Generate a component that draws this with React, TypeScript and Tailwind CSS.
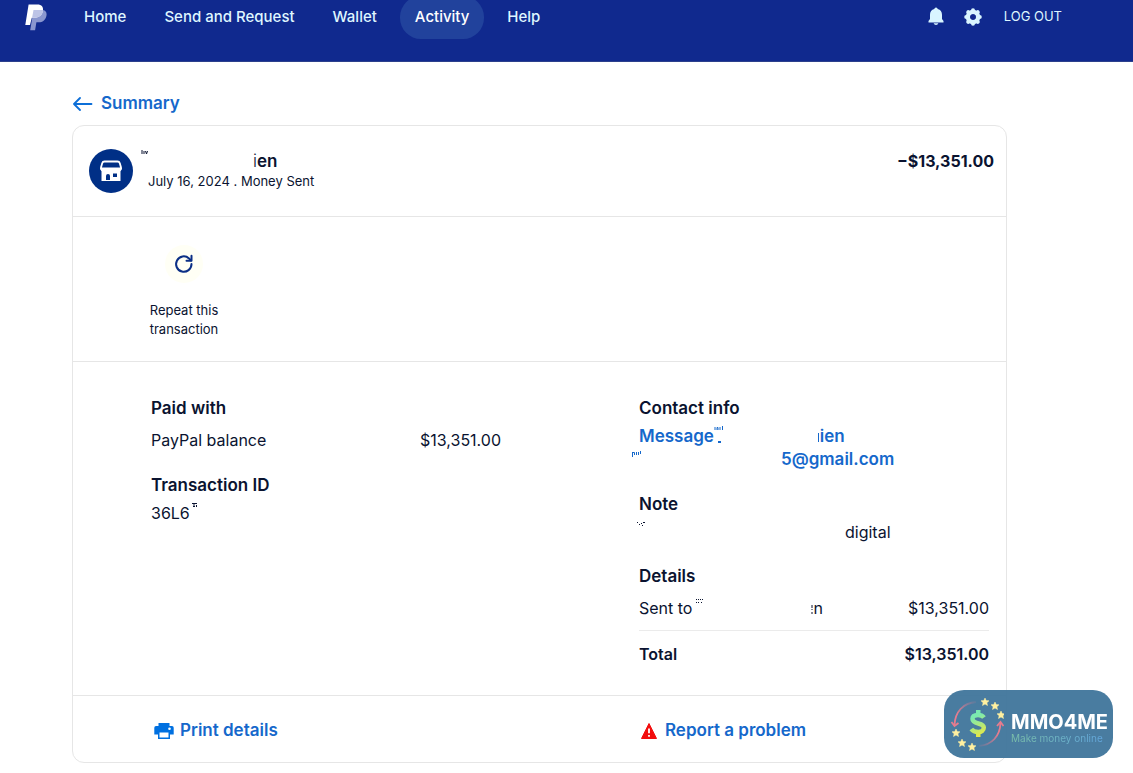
import React from 'react';

interface NavItem {
  id: string;
  label: string;
  active?: boolean;
}

interface SpecksProps {
  className: string;
  d: string;
  width: number;
  height: number;
}

const navItems: NavItem[] = [
  { id: '1', label: 'Home' },
  { id: '2', label: 'Send and Request' },
  { id: '3', label: 'Wallet' },
  { id: '4', label: 'Activity', active: true },
  { id: '5', label: 'Help' },
];

const Logo = () => (
  <svg viewBox="0 0 22 27" className="h-[27px] w-[22px]" aria-hidden="true">
    <path
      d="M8.5 6h8.7c3.4 0 5 2.6 4.2 6-1 4.2-3.7 6.3-7.8 6.3h-2.200l-1.300 8H5.200z"
      fill="#8a97cf"
    />
    <path
      d="M3.600.5h8.600c4.600 0 6.500 2.700 5.700 6.500-.9 4.500-4 6.800-8.700 6.800H6.800L5 21H.3z"
      fill="#fff"
    />
    <path
      d="M8.500 6h9.500c.1 4.700-3.700 7.800-8.800 7.800H7.100z"
      fill="#bdc4e6"
    />
  </svg>
);

const BellIcon = () => (
  <svg viewBox="0 0 16 19" className="h-[19px] w-4" fill="#d9f5ff" aria-hidden="true">
    <path d="M8 .5a1.700 1.700 0 0 1 1.700 1.500C12.600 2.700 14 5 14 7.800V12l1.500 2V15.500H.5V14L2 12V7.800C2 5 3.400 2.700 6.300 2A1.700 1.700 0 0 1 8 .5z" />
    <path d="M5.700 16.300h4.600c-.3 1.200-1.200 1.700-2.300 1.700s-2-.5-2.300-1.700z" />
  </svg>
);

const GearIcon = () => (
  <svg viewBox="0 0 18 18" className="h-[18px] w-[18px]" aria-hidden="true">
    <circle cx="9" cy="9" r="5" fill="none" stroke="#d9f5ff" strokeWidth="4.500" />
    <g stroke="#d9f5ff" strokeWidth="4" strokeLinecap="round">
      <path d="M9 2.200v1M9 14.800v1M2.200 9h1M14.800 9h1M4.200 4.200l.7.7M13.100 13.100l.7.7M4.200 13.800l.7-.7M13.100 4.900l.7-.7" />
    </g>
    <circle cx="9" cy="9" r="2.800" fill="#10298e" />
  </svg>
);

const StoreIcon = () => (
  <svg viewBox="0 0 24 22" className="h-[22px] w-6" fill="none" stroke="#fff" aria-hidden="true">
    <path d="M5.500 1.500h13q1.800 0 2.300 1.800L22 7.500v1H2v-1l1.200-4.200Q3.700 1.500 5.500 1.500z" strokeWidth="1.800" />
    <path
      d="M2 8c0 3.800 5 3.800 5 0 0 3.800 5 3.800 5 0 0 3.800 5 3.800 5 0 0 3.800 5 3.800 5 0"
      fill="#fff"
      strokeWidth="1.500"
    />
    <path d="M2.500 10h19v11h-19z" fill="#fff" stroke="none" />
    <path d="M7 20v-4a2 2 0 0 1 4 0v4z" fill="#002f86" stroke="none" />
    <path d="M14 13.500h4v3.500h-4z" fill="#002f86" stroke="none" />
  </svg>
);

const ArrowIcon = () => (
  <svg viewBox="0 0 20 14" className="h-[14px] w-5" fill="none" stroke="#0d6fd8" aria-hidden="true">
    <path d="M18.500 7H1.500M7 1l-6 6 6 6" strokeWidth="1.800" strokeLinecap="round" strokeLinejoin="round" />
  </svg>
);

const RepeatIcon = () => (
  <svg viewBox="0 0 20 20" className="h-5 w-5" fill="none" stroke="#0b2f86" aria-hidden="true">
    <path d="M17.500 10a7.700 7.700 0 1 1-2.500-5.600L17 6.500" strokeWidth="2" strokeLinecap="round" />
    <path d="M17.500 1.800v5h-5" strokeWidth="2" strokeLinecap="round" strokeLinejoin="round" />
  </svg>
);

const PrintIcon = () => (
  <svg viewBox="0 0 20 16" className="h-4 w-5" fill="#0070e0" aria-hidden="true">
    <path d="M4.500 0h11v3H18a1.700 1.700 0 0 1 1.700 1.700v6.800H16V16H4v-4.500H.3V4.700A1.700 1.700 0 0 1 2 3h2.500z" />
    <path d="M5.500 9.500h9v5h-9z" fill="#fff" />
    <circle cx="15.500" cy="5.800" r="1.300" fill="#fff" />
  </svg>
);

const WarningIcon = () => (
  <svg viewBox="0 0 16 16" className="h-4 w-4" aria-hidden="true">
    <path d="M8 .5 15.500 15.500H.5z" fill="#f20d0d" stroke="#f20d0d" strokeLinejoin="round" />
    <path d="M8 5.500v4.800M8 12v1.800" stroke="#fff" strokeWidth="1.800" />
  </svg>
);

// leftovers of the hidden names
const Specks = ({ className, d, width, height }: SpecksProps) => (
  <svg
    className={className}
    width={width}
    height={height}
    fill="none"
    stroke="currentColor"
    aria-hidden="true"
  >
    <path d={d} />
  </svg>
);

const Star = ({ x, y }: { x: number; y: number }) => (
  <path
    transform={`translate(${x} ${y})`}
    d="M0-4 1.200-1.400 4-1.200 1.900.7 2.500 3.500 0 2-2.500 3.500-1.900.7-4-1.200-1.200-1.400z"
    fill="#fff0a0"
    stroke="#fff0a0"
    strokeWidth="0.500"
  />
);

const Badge = () => (
  <div className="fixed right-5 bottom-[15px] flex h-[68px] w-[169px] items-center rounded-[20px] bg-[#3f759b]/95">
    <svg viewBox="0 0 60 68" className="h-[68px] w-[60px] shrink-0" fill="none" aria-hidden="true">
      <defs>
        <linearGradient id="dollar" gradientUnits="userSpaceOnUse" x1="28" y1="22" x2="40" y2="46">
          <stop offset="0.200" stopColor="#7beab0" />
          <stop offset="1" stopColor="#f0e83c" />
        </linearGradient>
        <linearGradient id="arcLeft" x1="1" y1="0" x2="0" y2="1">
          <stop offset="0" stopColor="#d8798f" stopOpacity="0.100" />
          <stop offset="0.700" stopColor="#e77c8e" />
        </linearGradient>
        <linearGradient id="arcRight" x1="0" y1="1" x2="1" y2="0">
          <stop offset="0" stopColor="#d8798f" stopOpacity="0.100" />
          <stop offset="0.700" stopColor="#e77c8e" />
        </linearGradient>
      </defs>
      <path d="M32 12C19 13 11 22 10.500 35" stroke="url(#arcLeft)" strokeWidth="1.800" />
      <path d="M7.500 32l3 4 4-3" stroke="#e77c8e" strokeWidth="1.800" />
      <path d="M35 56c13-1 21-10 21.500-23" stroke="url(#arcRight)" strokeWidth="1.800" />
      <path d="M53 36l3.500-4 3 4" stroke="#e77c8e" strokeWidth="1.800" />
      <path
        d="M40 27.500c-1.500-2-3.500-2.500-6-2.500-3.500 0-5.500 1.500-5.500 3.800 0 6.200 11.300 3.200 11.300 8.700 0 3-2.500 4.500-5.500 4.500-3 0-5.500-1-7-3"
        stroke="url(#dollar)"
        strokeWidth="4.500"
      />
      <path d="M32 20h4.500v5H32zM32 42h4.500v5H32z" fill="url(#dollar)" />
      <Star x={41} y={12} />
      <Star x={51} y={16} />
      <Star x={57} y={25} />
      <Star x={12} y={43} />
      <Star x={18} y={53} />
      <Star x={28} y={57} />
    </svg>
    <div className="ml-[7px] pt-2 whitespace-nowrap">
      <div className="text-[20px] leading-5 font-bold text-white">MMO4ME</div>
      <div className="bg-linear-to-r from-[#7cc0a8] to-[#62a5e0] bg-clip-text text-[10px] leading-3 text-transparent">
        Make money online
      </div>
    </div>
  </div>
);

const Header = () => (
  <header className="flex h-[62px] items-start justify-between overflow-hidden border-b border-[#2c408c] bg-[#10298e] pr-[71px] pl-[25px] text-[#dff6ff]">
    <div className="-mt-1 flex items-center">
      <a href="#" aria-label="PayPal">
        <Logo />
      </a>
      <nav className="ml-[22px] flex items-center gap-2">
        {navItems.map((item) => (
          <a
            href="#"
            key={item.id}
            className={`flex h-[43px] items-center rounded-[21px] px-[15px] text-[15px] font-medium whitespace-nowrap ${
              item.active ? 'bg-[#21429c] text-white' : ''
            }`}
          >
            {item.label}
          </a>
        ))}
      </nav>
    </div>
    <div className="flex h-[33px] items-center">
      <button type="button" aria-label="Notifications">
        <BellIcon />
      </button>
      <button type="button" aria-label="Settings" className="ml-5">
        <GearIcon />
      </button>
      <a href="#" className="ml-[22px] text-[13px] whitespace-nowrap">
        LOG OUT
      </a>
    </div>
  </header>
);

const App = () => {
  return (
    <div className="min-h-screen bg-white font-['Inter','Liberation_Sans',sans-serif] text-[#0a1330]">
      <Header />
      <main className="flex flex-col items-start pt-[30px] pr-[126px] pb-[11px] pl-[72px]">
        <a href="#" className="ml-px flex h-6 items-center gap-2 text-[17px] font-semibold text-[#1568cb]">
          <ArrowIcon />
          Summary
        </a>
        <div className="mt-[9px] w-full rounded-xl border border-[#e6e6e6]">
          <section className="flex h-[91px] items-start justify-between border-b border-[#e6e6e6] pr-3 pl-4">
            <div className="flex pt-[23px]">
              <div className="flex h-11 w-11 items-center justify-center rounded-full bg-[#002f86]">
                <StoreIcon />
              </div>
              <div className="relative ml-[15px]">
                <Specks
                  className="absolute top-px -left-[7px]"
                  d="M1 0v4M3 1v3M4.500 1l1 3 1-3"
                  width={8}
                  height={5}
                />
                <h1 className="pl-[105px] text-[17px] leading-6 font-semibold">
                  <span className="font-light">i</span>en
                </h1>
                <p className="text-[13px] leading-4">July 16, 2024 . Money Sent</p>
              </div>
            </div>
            <p className="pt-[23px] text-base leading-6 font-bold">−$13,351.00</p>
          </section>

          <section className="h-[145px] border-b border-[#e6e6e6] pt-[28px] pl-[68px]">
            <button type="button" className="flex w-[86px] flex-col items-center text-[13px] leading-[19px]">
              <span className="flex h-[38px] w-[38px] items-center justify-center rounded-full bg-[#fffff5]">
                <RepeatIcon />
              </span>
              <span className="mt-[18px] text-left">
                Repeat this
                <br />
                transaction
              </span>
            </button>
          </section>

          <section className="grid grid-cols-2 gap-[138px] border-b border-[#e6e6e6] pt-[34px] pr-[17px] pb-[29px] pl-[78px] text-base leading-6">
            <div>
              <h2 className="text-[17px] leading-6 font-semibold">Paid with</h2>
              <div className="mt-2 flex justify-between">
                <span>PayPal balance</span>
                <span>$13,351.00</span>
              </div>
              <h2 className="mt-[21px] text-[17px] leading-6 font-semibold">Transaction ID</h2>
              <p className="mt-1 flex">
                36L6
                <Specks className="mt-[2px] ml-[2px]" d="M0 .5h5M2 1v3M1 3.500h2M4.500 2v2" width={6} height={5} />
              </p>
            </div>

            <div>
              <h2 className="text-[17px] leading-6 font-semibold">Contact info</h2>
              <a href="#" className="mt-1 flex text-[17px] leading-6 font-semibold text-[#1568cb]">
                Message
                <Specks
                  className="mt-[2px]"
                  d="M1 4V1M3 4V1.500h1V4M6 1v3M8.500 0v4M4 15.500h3M4 16.500h3"
                  width={10}
                  height={18}
                />
                <span className="ml-[94px] flex">
                  <Specks className="mt-2 mr-px" d="M.5 1v9" width={1} height={10} />
                  ien
                </span>
              </a>
              <a
                href="#"
                className="relative flex pl-[142px] text-[17px] leading-[22px] font-semibold text-[#1568cb]"
              >
                <Specks
                  className="absolute top-[3px] -left-[7px]"
                  d="M.5 1v5M1 1.500h1.500V4M4.500 1v3M6.500 1v3M8.500 0v3"
                  width={10}
                  height={6}
                />
                5@gmail.com
              </a>
              <h2 className="mt-[22px] text-[17px] leading-6 font-semibold">Note</h2>
              <p className="relative mt-1 pl-[206px]">
                <Specks
                  className="absolute top-[2px] -left-[2px]"
                  d="M0 .5h1M2 2.500h1M4 1.500h1M6 .5h2M5 3.500h1"
                  width={8}
                  height={4}
                />
                digital
              </p>
              <h2 className="mt-5 text-[17px] leading-6 font-semibold">Details</h2>
              <div className="mt-2 flex justify-between border-b border-[#ebebeb] pb-[10px]">
                <span className="flex">
                  Sent to
                  <Specks
                    className="mt-[3px] ml-[4px]"
                    d="M0 .5h1M2 .5h1M4 .5h1M6 .5h1M0 3.500h1M2 3.500h1M5 3.500h1"
                    width={8}
                    height={5}
                  />
                  <span className="ml-[107px] flex">
                    <Specks className="mt-2" d="M1 1v3M1 5v1M1 8v2" width={2} height={10} />n
                  </span>
                </span>
                <span>$13,351.00</span>
              </div>
              <div className="mt-[11px] flex justify-between font-semibold">
                <span>Total</span>
                <span>$13,351.00</span>
              </div>
            </div>
          </section>

          <footer className="grid h-[66px] grid-cols-2 items-center gap-[138px] pt-[3px] pr-[17px] pl-[78px] text-[17px] font-semibold text-[#1568cb]">
            <a href="#" className="ml-[3px] flex items-center gap-[6px]">
              <PrintIcon />
              Print details
            </a>
            <a href="#" className="ml-[2px] flex items-center gap-2">
              <WarningIcon />
              Report a problem
            </a>
          </footer>
        </div>
      </main>
      <Badge />
    </div>
  );
};

export default App;
